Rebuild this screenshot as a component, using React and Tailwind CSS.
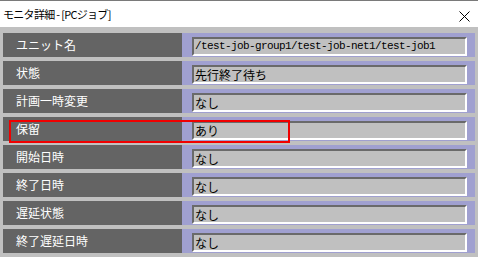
import React from "react";

const rows = [
  { label: "ユニット名", value: "/test-job-group1/test-job-net1/test-job1", mono: true },
  { label: "状態", value: "先行終了待ち" },
  { label: "計画一時変更", value: "なし" },
  { label: "保留", value: "あり" },
  { label: "開始日時", value: "なし" },
  { label: "終了日時", value: "なし" },
  { label: "遅延状態", value: "なし" },
  { label: "終了遅延日時", value: "なし" },
];

export default function App() {
  return (
    <div
      className="relative w-[478px] h-[257px] overflow-hidden bg-[#c0c0c0]"
      style={{ fontFamily: '"Noto Sans CJK JP", "Noto Sans", sans-serif' }}
    >
      <div className="h-[27px] bg-white border-t border-[#7a7a7a] flex items-center justify-between pl-[3px] pr-[8px]">
        <span className="text-[11px] leading-none tracking-[-0.7px] text-black">モニタ詳細 - [PCジョブ]</span>
        <svg width="11" height="11" viewBox="0 0 11 11" className="mt-[4px]">
          <path d="M0.5 0.5 L10.5 10.5 M10.5 0.5 L0.5 10.5" stroke="#000" strokeWidth="1" fill="none" />
        </svg>
      </div>
      <div className="flex flex-col gap-[4px] pt-[6px] pl-[3px]">
        {rows.map((r) => (
          <div key={r.label} className="flex h-[24px]">
            <div className="w-[179px] bg-[#646464] text-white text-[12px] leading-none pl-[13px] flex items-center">
              {r.label}
            </div>
            <div className="w-[293px] bg-[#a0a0d0] pl-[10px] pr-[8px] pt-[4px] pb-[1px] flex">
              <div className="flex-1 bg-[#c0c0c0] border-t-2 border-l-2 border-t-[#6a6a6a] border-l-[#6a6a6a] border-r-2 border-b-2 border-r-white border-b-white flex items-center pl-[1px]">
                {r.mono ? (
                  <span
                    className="text-[11px] leading-none tracking-[-0.6px] text-black"
                    style={{ fontFamily: '"Liberation Mono", "DejaVu Sans Mono", monospace' }}
                  >
                    {r.value}
                  </span>
                ) : (
                  <span className="text-[12px] leading-none text-black">{r.value}</span>
                )}
              </div>
            </div>
          </div>
        ))}
      </div>
      <div className="absolute left-[9px] top-[120px] w-[281px] h-[23px] border-2 border-[#f00000]" />
    </div>
  );
}
